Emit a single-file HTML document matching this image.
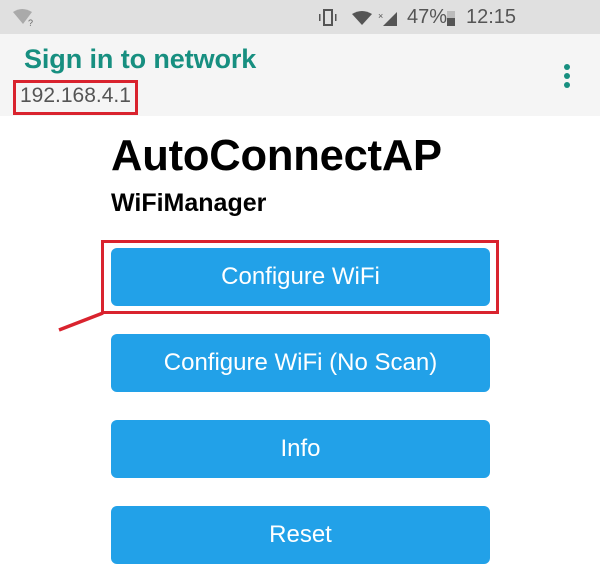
<!DOCTYPE html>
<html><head><meta charset="utf-8"><style>
*{margin:0;padding:0;box-sizing:border-box}
body{width:600px;height:573px;overflow:hidden;background:#fff;font-family:"Liberation Sans",sans-serif;position:relative}
.abs{position:absolute;white-space:nowrap}
.btn{position:absolute;left:111px;width:379px;height:58px;background:#22a1e8;border-radius:6px;color:#fff;font-size:24px;text-align:center;line-height:58px}
</style></head><body>
<div class="abs" style="left:0;top:0;width:600px;height:34px;background:#e0e0e0"></div>
<svg class="abs" style="left:12px;top:9px" width="24" height="18"><path d="M1 3 Q10 -3 20 3 L11 15 Z" fill="#aaa"/><text x="16" y="17" font-size="9" fill="#666" font-family="Liberation Sans">?</text></svg>
<svg class="abs" style="left:318px;top:8px" width="140" height="20">
<rect x="6" y="2" width="8" height="15" fill="none" stroke="#555" stroke-width="2"/><rect x="1" y="6" width="1.5" height="7" fill="#555"/><rect x="17" y="6" width="1.5" height="7" fill="#555"/>
<path d="M34 6 Q44 0 54 6 L44 17 Z" fill="#555"/>
<path d="M79 4 L79 18 L65 18 Z" fill="#555"/><text x="60" y="11" font-size="9" fill="#555">×</text>
<rect x="129" y="3" width="8" height="15" fill="#bbb"/><rect x="129" y="10" width="8" height="8" fill="#555"/>
</svg>
<div class="abs" style="left:407px;top:6px;font-size:20px;color:#555">47%</div>
<div class="abs" style="left:466px;top:6px;font-size:20px;color:#555">12:15</div>
<div class="abs" style="left:0;top:34px;width:600px;height:82px;background:#f5f5f5"></div>
<div class="abs" style="left:24px;top:44px;font-size:27px;color:#178f80;font-weight:bold;letter-spacing:-0.1px">Sign in to network</div>
<div class="abs" style="left:564px;top:64px;width:6px;height:6px;border-radius:3px;background:#178f80;box-shadow:0 9px 0 #178f80,0 18px 0 #178f80"></div>
<div class="abs" style="left:20px;top:84px;font-size:21px;color:#555">192.168.4.1</div>
<div class="abs" style="left:13px;top:80px;width:125px;height:35px;border:3px solid #d9232e"></div>
<div class="abs" style="left:111px;top:132px;font-size:43.5px;font-weight:bold;color:#000;letter-spacing:-0.2px">AutoConnectAP</div>
<div class="abs" style="left:111px;top:189px;font-size:25px;font-weight:bold;color:#000">WiFiManager</div>
<div class="btn" style="top:248px">Configure WiFi</div>
<div class="btn" style="top:334px">Configure WiFi (No Scan)</div>
<div class="btn" style="top:420px">Info</div>
<div class="btn" style="top:506px">Reset</div>
<div class="abs" style="left:101px;top:240px;width:398px;height:74px;border:3px solid #d9232e"></div>
<svg class="abs" style="left:0;top:0" width="600" height="573"><line x1="59" y1="330" x2="103" y2="313" stroke="#d9232e" stroke-width="3.5"/></svg>
</body></html>
